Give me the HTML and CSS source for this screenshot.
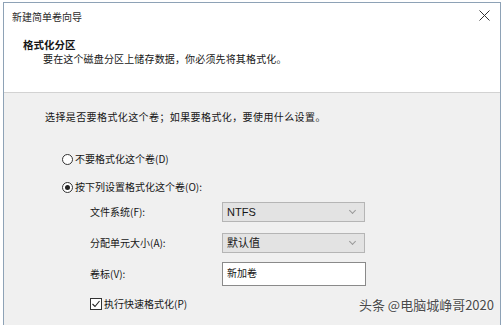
FILE: index.html
```html
<!DOCTYPE html>
<html lang="zh-CN">

<head>
    <meta charset="UTF-8">
    <title>新建简单卷向导</title>
    <link rel="stylesheet" href="styles.css">
</head>

<body>
    <div class="window">
        <div class="titlebar">
            <span>新建简单卷向导</span>
            <svg class="close" width="11" height="11" viewBox="0 0 11 11">
                <path d="M0.5 0.5 L10.5 10.5 M10.5 0.5 L0.5 10.5" stroke="#333" stroke-width="1" fill="none"/>
            </svg>
        </div>
        <div class="header">
            <div class="heading">格式化分区</div>
            <div class="subtitle">要在这个磁盘分区上储存数据，你必须先将其格式化。</div>
        </div>
        <div class="content">
            <div class="intro">选择是否要格式化这个卷；如果要格式化，要使用什么设置。</div>

            <div class="option first">
                <span class="radio"></span>
                <span>不要格式化这个卷(D)</span>
            </div>
            <div class="option second">
                <span class="radio checked"></span>
                <span>按下列设置格式化这个卷(O):</span>
            </div>

            <div class="field fs">
                <label>文件系统(F):</label>
                <div class="select">NTFS<span class="chevron"></span></div>
            </div>
            <div class="field unit">
                <label>分配单元大小(A):</label>
                <div class="select">默认值<span class="chevron"></span></div>
            </div>
            <div class="field vol">
                <label>卷标(V):</label>
                <div class="textbox">新加卷</div>
            </div>

            <div class="check-row">
                <svg class="checkbox" width="12" height="12" viewBox="0 0 12 12">
                    <rect x="0.5" y="0.5" width="11" height="11" fill="#fff" stroke="#333"/>
                    <path d="M2.5 6 L5 8.5 L9.5 3" stroke="#222" stroke-width="1.1" fill="none"/>
                </svg>
                <span>执行快速格式化(P)</span>
            </div>

            <div class="watermark">头条 @电脑城峥哥2020</div>
        </div>
    </div>
</body>

</html>
```

FILE: styles.css
```css
body {
    margin: 0;
    background-color: #ffffff;
    font-family: "Noto Sans CJK SC", "Liberation Sans", sans-serif;
    font-size: 10px;
    color: #161616;
}

.window {
    margin: 2px 0 0 3px;
    width: 496px;
    height: 322px;
    border: 1px solid #8ea2b6;
    border-bottom: none;
    display: flex;
    flex-direction: column;
    background-color: #ffffff;
}

.titlebar {
    height: 27px;
    padding: 0 10px 0 8px;
    display: flex;
    align-items: center;
    justify-content: space-between;
    font-size: 10px;
    color: #2a2a2a;
}

.close {
    margin-top: -3px;
}

.header {
    height: 63px;
    box-sizing: border-box;
    padding: 8px 0 0 19px;
    border-bottom: 1px solid #d2d2d2;
    line-height: 14px;
}

.heading {
    font-weight: bold;
    font-size: 10.5px;
}

.subtitle {
    padding-left: 20px;
    letter-spacing: 0.15px;
}

.content {
    flex: 1;
    position: relative;
    background-color: #f0f0f0;
    padding: 17px 0 0 41px;
    line-height: 14px;
}

.intro {
    letter-spacing: 0.4px;
}

.option {
    display: flex;
    align-items: center;
    gap: 2px;
    margin-left: 17px;
}

.option.first {
    margin-top: 28px;
}

.option.second {
    margin-top: 14px;
}

.radio {
    width: 9px;
    height: 9px;
    border: 1px solid #333333;
    border-radius: 50%;
    background-color: #ffffff;
    position: relative;
}

.radio.checked::after {
    content: "";
    position: absolute;
    left: 2px;
    top: 2px;
    width: 5px;
    height: 5px;
    border-radius: 50%;
    background-color: #222222;
}

.field {
    display: flex;
    align-items: center;
    margin-left: 45px;
}

.field label {
    width: 132px;
}

.field.fs {
    margin-top: 8px;
}

.field.unit {
    margin-top: 11px;
}

.field.vol {
    margin-top: 9px;
}

.select {
    width: 143px;
    height: 20px;
    box-sizing: border-box;
    border: 1px solid #b5b5b5;
    background-color: #e3e3e3;
    padding: 0 0 0 4px;
    display: flex;
    align-items: center;
    justify-content: space-between;
    font-family: "Liberation Sans", "Noto Sans CJK SC", sans-serif;
    font-size: 11px;
}

.select .chevron {
    width: 4px;
    height: 4px;
    margin-right: 9px;
    margin-top: -3px;
    border-right: 1px solid #999999;
    border-bottom: 1px solid #999999;
    transform: rotate(45deg);
}

.textbox {
    width: 144px;
    height: 24px;
    box-sizing: border-box;
    border: 1px solid #8a8a8a;
    background-color: #ffffff;
    padding: 3px 0 0 4px;
}

.check-row {
    display: flex;
    align-items: center;
    gap: 2px;
    margin: 11px 0 0 45px;
}

.watermark {
    position: absolute;
    right: 6px;
    bottom: 13px;
    font-size: 13px;
    color: #4a4a4a;
    text-shadow: 0 0 2px #ffffff;
}
```
